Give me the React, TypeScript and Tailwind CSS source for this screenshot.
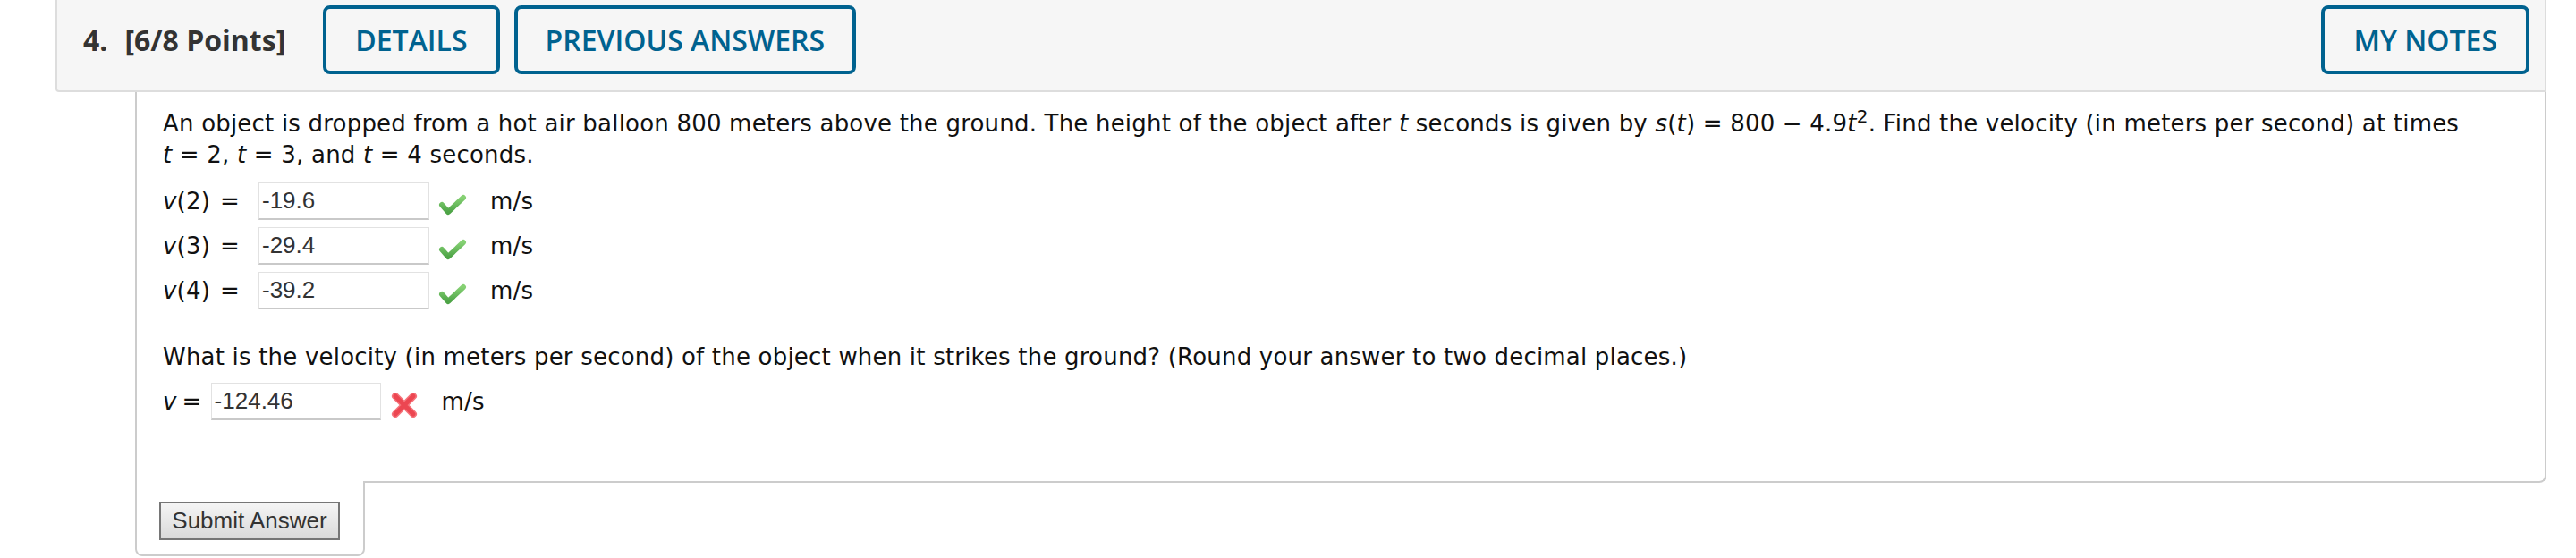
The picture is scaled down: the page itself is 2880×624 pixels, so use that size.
import React from "react";

const CheckMark = () => (
  <svg width="32" height="26" viewBox="0 0 32 26" className="mt-[8px] ml-[10px] shrink-0">
    <defs>
      <linearGradient id="chk" x1="0" y1="0" x2="0" y2="1">
        <stop offset="0" stopColor="#86d174" />
        <stop offset="1" stopColor="#4ea447" />
      </linearGradient>
    </defs>
    <path d="M4 13 L11 21 L28 5" fill="none" stroke="url(#chk)" strokeWidth="6" strokeLinecap="round" strokeLinejoin="round" />
  </svg>
);

const CrossMark = () => (
  <svg width="32" height="28" viewBox="0 0 32 28" className="mt-[8px] ml-[10px] shrink-0">
    <path d="M6 4 L26 24 M26 4 L6 24" fill="none" stroke="#f5737b" strokeWidth="8" strokeLinecap="round" />
    <path d="M6 4 L26 24 M26 4 L6 24" fill="none" stroke="#ec4651" strokeWidth="5" strokeLinecap="round" />
  </svg>
);

const Field = ({ value, w }: { value: string; w: string }) => (
  <input
    readOnly
    value={value}
    className={`${w} h-[42px] border border-[#e2e2e2] border-b-2 border-b-[#c9c9c9] bg-white pl-[3px] font-['Liberation_Sans',Arial,sans-serif] text-[26px] tracking-normal text-[#333] outline-none`}
  />
);

const answers = [
  { n: "2", v: "-19.6" },
  { n: "3", v: "-29.4" },
  { n: "4", v: "-39.2" },
];

export default function App() {
  return (
    <div className="min-h-[624px] bg-white pl-[62px] w-[2847px] font-['DejaVu_Sans',Verdana,sans-serif] text-[26px] text-[#111]">
      {/* Question header */}
      <div className="flex h-[103px] items-start rounded-bl-[4px] border-x-2 border-b-2 border-[#dddddd] bg-[#f6f6f6] pl-[29px] pr-[17px] pt-[6px] font-['Open_Sans',sans-serif]">
        <div className="flex h-[77px] items-center text-[32px] font-bold text-[#333]">
          <span>4.</span>
          <span className="ml-[19px]">[6/8 Points]</span>
        </div>
        <button className="ml-[42px] h-[77px] rounded-[8px] border-4 border-[#00628f] px-[32px] text-[32px] font-semibold text-[#00628f]">
          DETAILS
        </button>
        <button className="ml-[16px] h-[77px] rounded-[8px] border-4 border-[#00628f] px-[31px] text-[32px] font-semibold text-[#00628f]">
          PREVIOUS ANSWERS
        </button>
        <button className="ml-auto h-[77px] rounded-[8px] border-4 border-[#00628f] px-[32px] text-[32px] font-semibold text-[#00628f]">
          MY NOTES
        </button>
      </div>

      {/* Question body */}
      <div className="ml-[89px] rounded-br-[8px] border-x-2 border-b-2 border-[#cccccc] pb-[68px] pl-[29px] pr-[28px] pt-[18px] tracking-[0.2px]">
        <p className="leading-[35px]">
          An object is dropped from a hot air balloon 800 meters above the ground. The height of the object after <i>t</i> seconds is given by{" "}
          <span className="whitespace-nowrap">
            <i>s</i>(<i>t</i>) = 800 − 4.9<i>t</i>
            <sup className="text-[20px]">2</sup>.
          </span>{" "}
          Find the velocity (in meters per second) at times{" "}
          <span className="whitespace-nowrap">
            <i>t</i> = 2,
          </span>{" "}
          <span className="whitespace-nowrap">
            <i>t</i> = 3,
          </span>{" "}
          and{" "}
          <span className="whitespace-nowrap">
            <i>t</i> = 4
          </span>{" "}
          seconds.
        </p>

        <div className="mt-[13px] flex flex-col gap-[8px]">
          {answers.map((a) => (
            <div key={a.n} className="flex h-[42px] items-center">
              <span className="w-[64px] shrink-0">
                <i>v</i>({a.n})
              </span>
              <span>=</span>
              <div className="ml-[21px]">
                <Field value={a.v} w="w-[191px]" />
              </div>
              <CheckMark />
              <span className="ml-[26px]">m/s</span>
            </div>
          ))}
        </div>

        <p className="mt-[37px] leading-[32px]">
          What is the velocity (in meters per second) of the object when it strikes the ground? (Round your answer to two decimal places.)
        </p>

        <div className="mt-[13px] flex h-[42px] items-center">
          <i>v</i>
          <span className="ml-[6px]">=</span>
          <div className="ml-[10px]">
            <Field value="-124.46" w="w-[190px]" />
          </div>
          <CrossMark />
          <span className="ml-[26px]">m/s</span>
        </div>
      </div>

      {/* Submit area */}
      <div className="-mt-[2px] ml-[89px] h-[84px] w-[257px] rounded-b-[8px] border-x-2 border-b-2 border-[#cccccc] bg-white pl-[25px] pt-[23px]">
        <button className="h-[43px] w-[202px] border-2 border-[#767676] bg-gradient-to-b from-[#f5f5f5] to-[#dadada] font-['Liberation_Sans',Arial,sans-serif] text-[26px] text-[#333]">
          Submit Answer
        </button>
      </div>
    </div>
  );
}
